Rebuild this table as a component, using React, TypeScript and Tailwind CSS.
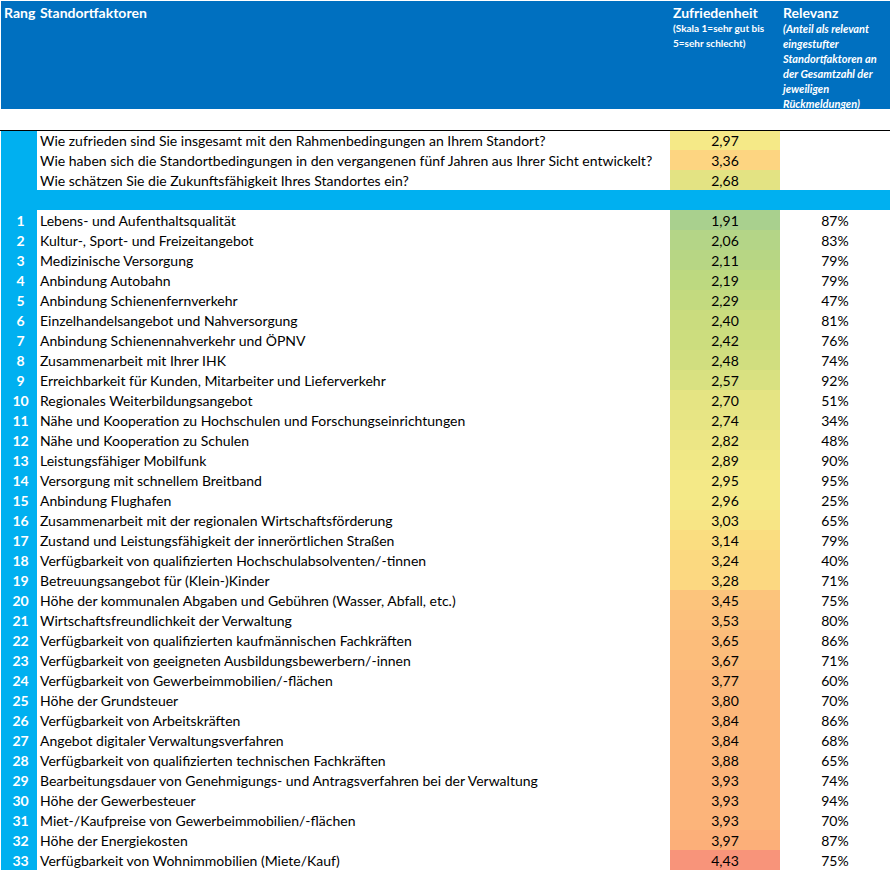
import React from "react";

const questions: [string, number][] = [
  ["Wie zufrieden sind Sie insgesamt mit den Rahmenbedingungen an Ihrem Standort?", 2.97],
  ["Wie haben sich die Standortbedingungen in den vergangenen fünf Jahren aus Ihrer Sicht entwickelt?", 3.36],
  ["Wie schätzen Sie die Zukunftsfähigkeit Ihres Standortes ein?", 2.68],
];

const rows: [string, number, number][] = [
  ["Lebens- und Aufenthaltsqualität", 1.91, 87],
  ["Kultur-, Sport- und Freizeitangebot", 2.06, 83],
  ["Medizinische Versorgung", 2.11, 79],
  ["Anbindung Autobahn", 2.19, 79],
  ["Anbindung Schienenfernverkehr", 2.29, 47],
  ["Einzelhandelsangebot und Nahversorgung", 2.4, 81],
  ["Anbindung Schienennahverkehr und ÖPNV", 2.42, 76],
  ["Zusammenarbeit mit Ihrer IHK", 2.48, 74],
  ["Erreichbarkeit für Kunden, Mitarbeiter und Lieferverkehr", 2.57, 92],
  ["Regionales Weiterbildungsangebot", 2.7, 51],
  ["Nähe und Kooperation zu Hochschulen und Forschungseinrichtungen", 2.74, 34],
  ["Nähe und Kooperation zu Schulen", 2.82, 48],
  ["Leistungsfähiger Mobilfunk", 2.89, 90],
  ["Versorgung mit schnellem Breitband", 2.95, 95],
  ["Anbindung Flughafen", 2.96, 25],
  ["Zusammenarbeit mit der regionalen Wirtschaftsförderung", 3.03, 65],
  ["Zustand und Leistungsfähigkeit der innerörtlichen Straßen", 3.14, 79],
  ["Verfügbarkeit von qualifizierten Hochschulabsolventen/-tinnen", 3.24, 40],
  ["Betreuungsangebot für (Klein-)Kinder", 3.28, 71],
  ["Höhe der kommunalen Abgaben und Gebühren (Wasser, Abfall, etc.)", 3.45, 75],
  ["Wirtschaftsfreundlichkeit der Verwaltung", 3.53, 80],
  ["Verfügbarkeit von qualifizierten kaufmännischen Fachkräften", 3.65, 86],
  ["Verfügbarkeit von geeigneten Ausbildungsbewerbern/-innen", 3.67, 71],
  ["Verfügbarkeit von Gewerbeimmobilien/-flächen", 3.77, 60],
  ["Höhe der Grundsteuer", 3.8, 70],
  ["Verfügbarkeit von Arbeitskräften", 3.84, 86],
  ["Angebot digitaler Verwaltungsverfahren", 3.84, 68],
  ["Verfügbarkeit von qualifizierten technischen Fachkräften", 3.88, 65],
  ["Bearbeitungsdauer von Genehmigungs- und Antragsverfahren bei der Verwaltung", 3.93, 74],
  ["Höhe der Gewerbesteuer", 3.93, 94],
  ["Miet-/Kaufpreise von Gewerbeimmobilien/-flächen", 3.93, 70],
  ["Höhe der Energiekosten", 3.97, 87],
  ["Verfügbarkeit von Wohnimmobilien (Miete/Kauf)", 4.43, 75],
];

const stops: [number, number[]][] = [
  [1.91, [169, 208, 142]],
  [2.2, [190, 217, 128]],
  [2.4, [202, 220, 126]],
  [2.7, [229, 228, 131]],
  [2.97, [245, 233, 135]],
  [3.14, [250, 221, 128]],
  [3.36, [253, 213, 129]],
  [3.45, [252, 196, 124]],
  [3.93, [252, 180, 122]],
  [3.97, [252, 175, 121]],
  [4.43, [248, 148, 122]],
];

function colorFor(v: number): string {
  if (v <= stops[0][0]) return `rgb(${stops[0][1].join(",")})`;
  for (let i = 0; i < stops.length - 1; i++) {
    const [a, ca] = stops[i];
    const [b, cb] = stops[i + 1];
    if (v >= a && v <= b) {
      const t = (v - a) / (b - a);
      const c = ca.map((x, k) => Math.round(x + (cb[k] - x) * t));
      return `rgb(${c.join(",")})`;
    }
  }
  return `rgb(${stops[stops.length - 1][1].join(",")})`;
}

const fmt = (v: number) => v.toFixed(2).replace(".", ",");

export default function App() {
  return (
    <div
      className="w-[892px] h-[872px] bg-white text-black overflow-hidden"
      style={{ fontFamily: "Lato, 'Liberation Sans', sans-serif" }}
    >
      {/* Header */}
      <div className="pt-[1px] pl-[1px]">
        <div className="flex w-[889px] h-[108px] bg-[#0070C0] text-white font-bold overflow-hidden">
          <div className="w-[36px] pl-[3px] pt-[3px] text-[14px] leading-[18px]">Rang</div>
          <div className="w-[633px] pl-[3px] pt-[3px] text-[14px] leading-[18px]">Standortfaktoren</div>
          <div className="w-[110px] pl-[3px] pt-[3px]">
            <div className="text-[14px] leading-[18px]">Zufriedenheit</div>
            <div className="text-[10px] leading-[15px] -mt-[1px] whitespace-nowrap">
              (Skala 1=sehr gut bis
              <br />
              5=sehr schlecht)
            </div>
          </div>
          <div className="w-[110px] pl-[3px] pt-[3px]">
            <div className="text-[14px] leading-[18px]">Relevanz</div>
            <div className="text-[11px] leading-[15px] -mt-[1px] italic whitespace-nowrap">
              (Anteil als relevant
              <br />
              eingestufter
              <br />
              Standortfaktoren an
              <br />
              der Gesamtzahl der
              <br />
              jeweiligen
              <br />
              Rückmeldungen)
            </div>
          </div>
        </div>
      </div>

      <div className="h-[21px]" />
      <div className="w-[890px] h-[1px] bg-black" />

      <div className="pl-[1px] text-[14px]">
        {questions.map(([q, v], i) => (
          <div key={i} className={`flex ${i === 0 ? "h-[19px]" : "h-[20px]"} leading-[19px]`}>
            <div className="w-[36px] bg-[#00B0F0]" />
            <div className="w-[633px] pl-[3px] whitespace-nowrap flex items-end">{q}</div>
            <div className="w-[110px] flex items-end justify-center" style={{ backgroundColor: colorFor(v) }}>
              {fmt(v)}
            </div>
            <div className="w-[110px]" />
          </div>
        ))}
        <div className="w-[889px] h-[20px] bg-[#00B0F0]" />
        {rows.map(([name, v, r], i) => (
          <div key={i} className="flex h-[20px] leading-[19px]">
            <div className="w-[36px] bg-[#00B0F0] text-white font-bold text-center pl-[3px] pt-[1px]">{i + 1}</div>
            <div className="w-[633px] pl-[3px] pt-[1px] whitespace-nowrap">{name}</div>
            <div className="w-[110px] text-center pt-[1px]" style={{ backgroundColor: colorFor(v) }}>
              {fmt(v)}
            </div>
            <div className="w-[110px] text-center pt-[1px]">{r}%</div>
          </div>
        ))}
      </div>
    </div>
  );
}
